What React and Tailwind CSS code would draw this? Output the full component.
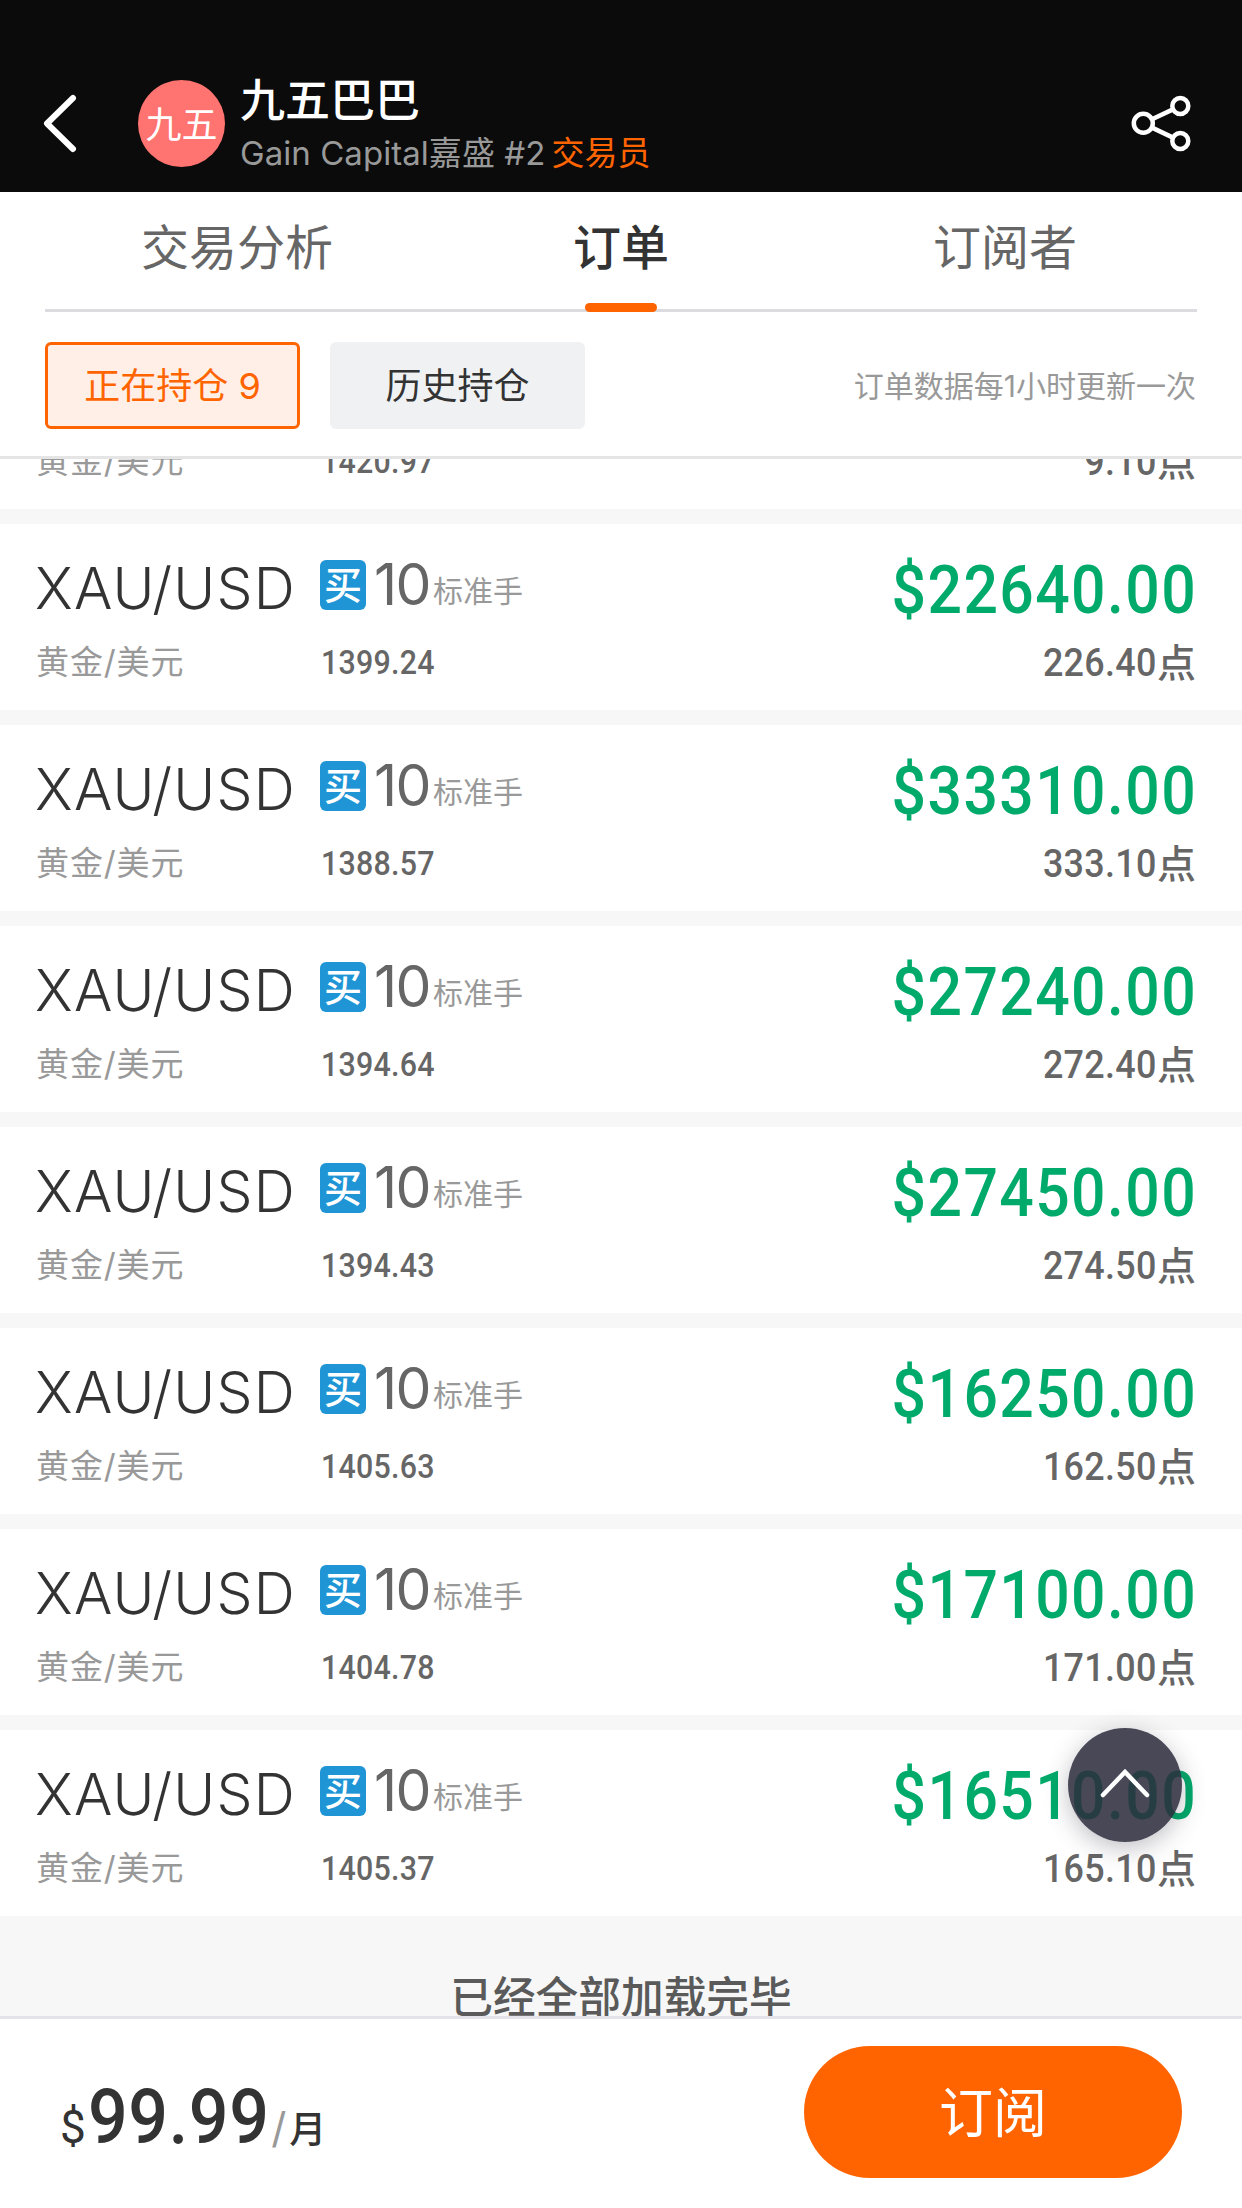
import React from 'react';

const orders = [
  { price: '1420.97', profit: '$910.00', pips: '9.10' },
  { price: '1399.24', profit: '$22640.00', pips: '226.40' },
  { price: '1388.57', profit: '$33310.00', pips: '333.10' },
  { price: '1394.64', profit: '$27240.00', pips: '272.40' },
  { price: '1394.43', profit: '$27450.00', pips: '274.50' },
  { price: '1405.63', profit: '$16250.00', pips: '162.50' },
  { price: '1404.78', profit: '$17100.00', pips: '171.00' },
  { price: '1405.37', profit: '$16510.00', pips: '165.10' },
];

function Header() {
  return (
    <header className="flex h-[192px] shrink-0 items-start bg-[#0b0b0b] pl-[42px] pr-[48px] text-white">
      <svg className="mt-[92px] h-16 w-9" viewBox="0 0 36 64" fill="none" stroke="currentColor" strokeWidth="6" strokeLinecap="round" strokeLinejoin="round">
        <path d="M31 6 L5 31.5 L31 57" />
      </svg>
      <div className="ml-[60px] mt-20 flex h-[87px] w-[87px] items-center justify-center rounded-full bg-[#ff7370] pt-[2px] text-[36px] leading-none">
        九五
      </div>
      <div className="ml-[15px] mt-[73px]">
        <div className="text-[45px] font-medium leading-[56px]">九五巴巴</div>
        <div className="mt-[3px] whitespace-nowrap text-[33px] leading-[42px] text-[#999]">
          <span className="tracking-[0.05px]">Gain Capital嘉盛 #2</span>
          <span className="ml-[6px] text-[#ff6400]">交易员</span>
        </div>
      </div>
      <svg className="ml-auto mt-[92px] h-16 w-16" viewBox="0 0 64 64" fill="none" stroke="currentColor" strokeWidth="4.5">
        <circle cx="13.3" cy="31.3" r="9.5" />
        <circle cx="50.3" cy="14" r="8" />
        <circle cx="50.3" cy="49" r="8" />
        <path d="M22 27.2 L43 17.4 M22 35.6 L43 45.6" />
      </svg>
    </header>
  );
}

function Tab({ label, active }) {
  return (
    <div className="flex flex-1 flex-col items-center">
      <div className={active ? 'mt-[29px] text-[48px] font-medium leading-[54px] text-[#333]' : 'mt-[29px] text-[48px] leading-[54px] text-[#666]'}>{label}</div>
      {active && <div className="-mb-[3px] mt-auto h-[9px] w-[72px] rounded-full bg-[#ff6400]" />}
    </div>
  );
}

function OrderRow({ order }) {
  return (
    <div className="mb-[15px] flex h-[186px] shrink-0 bg-white pl-[35px] pr-[46px]">
      <div className="w-[285px]">
        <div className="mt-9 text-[57px] font-[360] leading-[57px] tracking-[1.2px] text-[#333]">XAU/USD</div>
        <div className="ml-px mt-[23px] text-[33px] leading-[44px] tracking-[0.9px] text-[#999]">黄金/美元</div>
      </div>
      <div>
        <div className="mt-9 flex h-[50px] items-center">
          <div className="flex h-[50px] w-[46px] items-center justify-center rounded-md bg-[#1f95d6] text-[38px] font-medium leading-none text-white">买</div>
          <div className="ml-2 text-[57px] font-[380] leading-[50px] tracking-[-1.6px] text-[#666]">10</div>
          <div className="ml-[3px] mt-[12px] text-[30px] leading-[50px] text-[#999]">标准手</div>
        </div>
        <div className="ml-[1px] mt-[31px] w-[134px] origin-left scale-x-92 font-[Roboto] text-[33px] font-medium leading-[44px] tracking-[0.009em] text-[#666]">{order.price}</div>
      </div>
      <div className="ml-auto text-right">
        <div className="-mr-px mt-[34px] origin-right scale-x-92 font-[Roboto] text-[66px] font-medium leading-[66px] tracking-[0.023em] text-[#00aa6b]">{order.profit}</div>
        <div className="mt-[17px] flex justify-end text-[#666]">
          <span className="origin-right scale-x-92 font-[Roboto] text-[39px] font-medium leading-[44px] tracking-[0.009em]">{order.pips}</span>
          <span className="text-[39px] font-medium leading-[44px]">点</span>
        </div>
      </div>
    </div>
  );
}

export default function App() {
  return (
    <div className="relative flex h-[2208px] w-[1242px] flex-col overflow-hidden bg-white font-['Inter','Noto_Sans_CJK_SC',sans-serif]">
      <Header />

      <nav className="mx-[45px] flex h-[120px] shrink-0 border-b-3 border-[#dcdce0]">
        <Tab label="交易分析" />
        <Tab label="订单" active />
        <Tab label="订阅者" />
      </nav>

      <div className="flex h-[147px] shrink-0 items-start border-b-3 border-[#e5e5e5] px-[45px] pt-[30px] text-[36px] leading-[44px]">
        <div className="flex h-[87px] w-[255px] items-center justify-center rounded-md border-3 border-[#ff6400] bg-[#ffefe6] text-[#ff6400]">正在持仓 9</div>
        <div className="ml-[30px] flex h-[87px] w-[255px] items-center justify-center rounded-md bg-[#f0f1f3] text-[#333]">历史持仓</div>
        <div className="ml-auto mr-px mt-[22px] text-[30px] text-[#999]">订单数据每1小时更新一次</div>
      </div>

      {/* scrolled list, the first row is cut by the filter bar */}
      <main className="flex min-h-0 flex-1 flex-col overflow-hidden bg-[#f7f7f7]">
        <div className="-mt-[136px] flex shrink-0 flex-col">
          {orders.map((order) => (
            <OrderRow key={order.price} order={order} />
          ))}
        </div>
        <div className="mt-[39px] shrink-0 text-center text-[42.7px] font-medium leading-[56px] text-[#5a5a5a]">已经全部加载完毕</div>
      </main>

      <footer className="flex h-[192px] shrink-0 items-start border-t-3 border-[#e4e3e9] bg-white pl-[60px] pr-[60px]">
        <div className="mt-[60px] flex items-baseline text-[#333]">
          <span className="font-[Roboto] text-[46px] leading-[76px]">$</span>
          <span className="-mr-[14px] ml-[2px] origin-left scale-x-92 font-[Roboto] text-[76px] font-medium leading-[76px] tracking-[0.009em]">99.99</span>
          <span className="text-[42px] text-[#999]">/</span>
          <span className="ml-[3px] text-[37px] font-medium">月</span>
        </div>
        <div className="ml-auto mt-[27px] flex h-[132px] w-[378px] items-center justify-center rounded-full bg-[#ff6400] pt-[3px] text-[54px] leading-none text-white">订阅</div>
      </footer>

      <button className="absolute right-[60px] top-[1728px] flex h-[114px] w-[114px] items-center justify-center rounded-full bg-[#2d2d3e]/87 shadow-[0_6px_24px_rgba(45,45,62,0.3)]">
        <svg className="h-[60px] w-[60px]" viewBox="0 0 60 60" fill="none" stroke="white" strokeWidth="4.5" strokeLinecap="round">
          <path d="M8 40 L30 17 L52 40" />
        </svg>
      </button>
    </div>
  );
}
